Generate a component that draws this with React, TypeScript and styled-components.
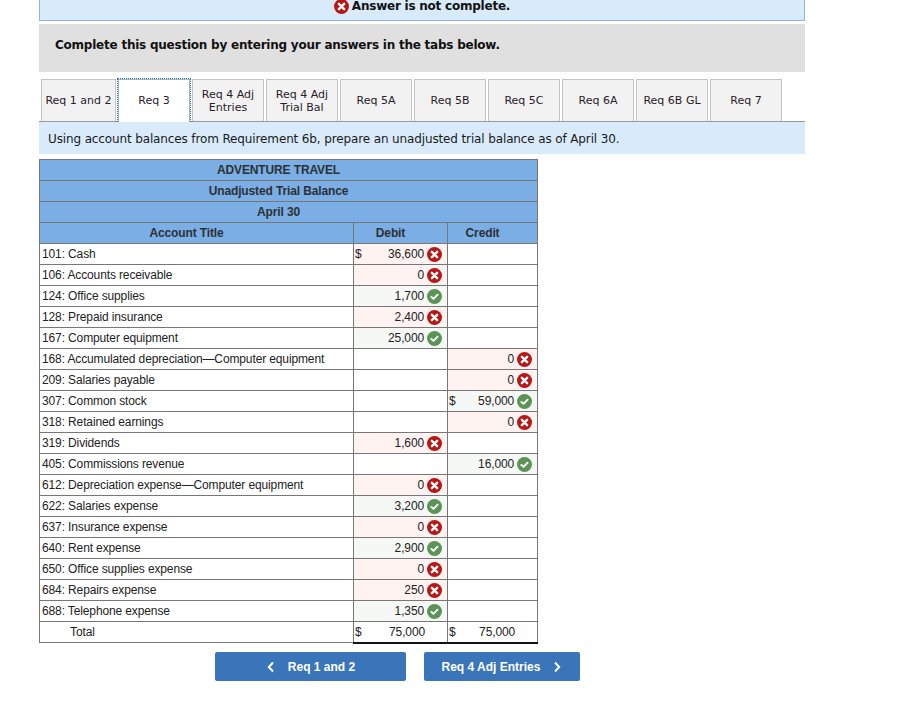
import React from 'react'
import styled, { createGlobalStyle, css } from 'styled-components'

const GlobalStyle = createGlobalStyle`
	html, body {
		margin: 0;
		padding: 0;
		background: #fff;
		overflow: hidden;
	}
`

const Page = styled.div`
	width: 902px;
	height: 725px;
	padding-left: 39px;
	box-sizing: border-box;
	overflow: hidden;
	font-family: "DejaVu Sans", Verdana, sans-serif;
	color: #111;
`

const Banner = styled.div`
	width: 766px;
	height: 31px;
	margin-top: -10px;
	box-sizing: border-box;
	background: #d9ebfa;
	border: 1px solid #8db5dc;
	display: flex;
	align-items: flex-start;
	justify-content: center;
	gap: 3px;
	padding: 8px 0 0 0;
	font-size: 12px;
	letter-spacing: -0.23px;
	font-weight: 700;
	line-height: 15px;
`

const Instructions = styled.div`
	width: 766px;
	height: 48px;
	margin-top: 3px;
	box-sizing: border-box;
	background: #e0e0e0;
	padding: 13px 16px;
	font-size: 12px;
	letter-spacing: -0.23px;
	font-weight: 700;
	line-height: 16px;
`

const TabBar = styled.div`
	width: 766px;
	height: 43px;
	margin-top: 7px;
	box-sizing: border-box;
	border-bottom: 1px solid #999;
	padding-left: 2px;
	display: flex;
	gap: 2px;
`

const Tab = styled.div<{ $active?: boolean; $wide?: boolean }>`
	width: ${props => (props.$wide ? 75 : 72)}px;
	height: 42px;
	box-sizing: border-box;
	display: flex;
	flex: none;
	align-items: center;
	justify-content: center;
	text-align: center;
	font-size: 11px;
	line-height: 13px;
	color: #2a1a2a;
	background: #f2f2f2;
	border: 1px solid #c4c4c4;
	border-bottom: 0;
	${props => props.$active && css`
		position: relative;
		width: 74px;
		height: 44px;
		margin: -1px -1px 0;
		padding-bottom: 1px;
		background: #fff;
		border: 1px dotted #2f6fb0;
		border-bottom: 0;
		box-shadow: inset 1px 1px 0 #9db4cb, inset -1px 0 0 #9db4cb;
	`}
`

const Prompt = styled.div`
	width: 766px;
	height: 32px;
	box-sizing: border-box;
	background: #d9ebfa;
	padding: 10px 9px 0;
	font-size: 12px;
	letter-spacing: -0.13px;
	line-height: 15px;
	color: #1a1a1a;
`

const Sheet = styled.table`
	width: 498px;
	margin-top: 5px;
	border-collapse: collapse;
	table-layout: fixed;
	font-family: "Liberation Sans", Arial, sans-serif;
	font-size: 12px;
	letter-spacing: -0.125px;
	color: #222;
`

const HeadCell = styled.th`
	height: 21px;
	padding: 0 20px 0 0;
	box-sizing: border-box;
	background: #7aaee4;
	border: 1px solid #777;
	font-weight: 700;
	text-align: center;
	color: #2c3136;
`

const TitleCell = styled.td<{ $indent?: boolean }>`
	height: 21px;
	padding: 0 0 0 ${props => (props.$indent ? 30 : 2)}px;
	box-sizing: border-box;
	border: 1px solid #777;
	white-space: nowrap;
`

const AmountCell = styled.td<{ $state?: 'bad' | 'good'; $total?: boolean }>`
	height: 21px;
	padding: 0;
	box-sizing: border-box;
	border: 1px solid #777;
	background: ${props => (props.$state === 'bad' ? '#fff3f2' : props.$state === 'good' ? '#f6f8f5' : '#fff')};
	${props => props.$total && 'border-top: 1px solid #222; border-bottom: 2px solid #111;'}
`

const AmountInner = styled.div<{ $reserve: number }>`
	display: flex;
	align-items: center;
	padding: 0 ${props => props.$reserve}px 0 1px;
`

const Dollar = styled.span`
	font-size: 12px;
`

const Amount = styled.span`
	margin-left: auto;
`

const StatusIcon = styled.svg`
	width: 15px;
	height: 15px;
	margin-left: 3px;
	flex: none;
`

const BannerIcon = styled(StatusIcon)`
	margin-left: 0;
`

const NavRow = styled.div`
	display: flex;
	margin: 8px 0 0 176px;
	gap: 18px;
`

const NavButton = styled.div<{ $width: number }>`
	width: ${props => props.$width}px;
	height: 29px;
	box-sizing: border-box;
	padding-top: 1px;
	background: #3a75b9;
	border-radius: 2px;
	display: flex;
	align-items: center;
	justify-content: center;
	gap: 12px;
	color: #fff;
	font-family: "Liberation Sans", Arial, sans-serif;
	font-size: 12px;
	font-weight: 700;
`

const Chevron = styled.svg`
	width: 10px;
	height: 12px;
`

const BadMark = () => (
	<>
		<circle cx="8" cy="8" r="8" fill="#b91616" />
		<path d="M5.2 5.2l5.6 5.6M10.8 5.2l-5.6 5.6" stroke="#fff" strokeWidth="2.6" strokeLinecap="round" />
	</>
)

const BadIcon = () => (
	<StatusIcon viewBox="0 0 16 16">
		<BadMark />
	</StatusIcon>
)

const GoodIcon = () => (
	<StatusIcon viewBox="0 0 16 16">
		<circle cx="8" cy="8" r="8" fill="#5c9458" />
		<path d="M4.6 8.4l2.3 2.2 4.4-4.6" stroke="#fff" strokeWidth="2" fill="none" strokeLinecap="round" strokeLinejoin="round" />
	</StatusIcon>
)

type Entry = {
	value: string;
	ok: boolean;
	dollar?: boolean;
}

type Line = {
	title: string;
	debit?: Entry;
	credit?: Entry;
}

const LINES: Line[] = [
	{ title: '101: Cash', debit: { value: '36,600', ok: false, dollar: true } },
	{ title: '106: Accounts receivable', debit: { value: '0', ok: false } },
	{ title: '124: Office supplies', debit: { value: '1,700', ok: true } },
	{ title: '128: Prepaid insurance', debit: { value: '2,400', ok: false } },
	{ title: '167: Computer equipment', debit: { value: '25,000', ok: true } },
	{ title: '168: Accumulated depreciation—Computer equipment', credit: { value: '0', ok: false } },
	{ title: '209: Salaries payable', credit: { value: '0', ok: false } },
	{ title: '307: Common stock', credit: { value: '59,000', ok: true, dollar: true } },
	{ title: '318: Retained earnings', credit: { value: '0', ok: false } },
	{ title: '319: Dividends', debit: { value: '1,600', ok: false } },
	{ title: '405: Commissions revenue', credit: { value: '16,000', ok: true } },
	{ title: '612: Depreciation expense—Computer equipment', debit: { value: '0', ok: false } },
	{ title: '622: Salaries expense', debit: { value: '3,200', ok: true } },
	{ title: '637: Insurance expense', debit: { value: '0', ok: false } },
	{ title: '640: Rent expense', debit: { value: '2,900', ok: true } },
	{ title: '650: Office supplies expense', debit: { value: '0', ok: false } },
	{ title: '684: Repairs expense', debit: { value: '250', ok: false } },
	{ title: '688: Telephone expense', debit: { value: '1,350', ok: true } },
]

const TABS = [
	['Req 1 and 2'],
	['Req 3'],
	['Req 4 Adj', 'Entries'],
	['Req 4 Adj', 'Trial Bal'],
	['Req 5A'],
	['Req 5B'],
	['Req 5C'],
	['Req 6A'],
	['Req 6B GL'],
	['Req 7'],
]

const EntryCell = ({ entry }: { entry?: Entry }) => {
	if (!entry) return <AmountCell />
	return (
		<AmountCell $state={entry.ok ? 'good' : 'bad'}>
			<AmountInner $reserve={5}>
				{entry.dollar && <Dollar>$</Dollar>}
				<Amount>{entry.value}</Amount>
				{entry.ok ? <GoodIcon /> : <BadIcon />}
			</AmountInner>
		</AmountCell>
	)
}

const TotalCell = () => (
	<AmountCell $total>
		<AmountInner $reserve={22}>
			<Dollar>$</Dollar>
			<Amount>75,000</Amount>
		</AmountInner>
	</AmountCell>
)

const App = () => {
	return (
		<Page>
			<GlobalStyle />
			<Banner>
				<BannerIcon viewBox="0 0 16 16">
					<BadMark />
				</BannerIcon>
				<span>Answer is not complete.</span>
			</Banner>
			<Instructions>Complete this question by entering your answers in the tabs below.</Instructions>
			<TabBar>
				{TABS.map((lines, i) => (
					<Tab key={lines.join()} $active={i === 1} $wide={i === 0}>
						<div>
							{lines.map(line => (
								<div key={line}>{line}</div>
							))}
						</div>
					</Tab>
				))}
			</TabBar>
			<Prompt>Using account balances from Requirement 6b, prepare an unadjusted trial balance as of April 30.</Prompt>
			<Sheet>
				<colgroup>
					<col width="314" />
					<col width="94" />
					<col width="90" />
				</colgroup>
				<thead>
					<tr><HeadCell colSpan={3}>ADVENTURE TRAVEL</HeadCell></tr>
					<tr><HeadCell colSpan={3}>Unadjusted Trial Balance</HeadCell></tr>
					<tr><HeadCell colSpan={3}>April 30</HeadCell></tr>
					<tr>
						<HeadCell>Account Title</HeadCell>
						<HeadCell>Debit</HeadCell>
						<HeadCell>Credit</HeadCell>
					</tr>
				</thead>
				<tbody>
					{LINES.map(line => (
						<tr key={line.title}>
							<TitleCell>{line.title}</TitleCell>
							<EntryCell entry={line.debit} />
							<EntryCell entry={line.credit} />
						</tr>
					))}
					<tr>
						<TitleCell $indent>Total</TitleCell>
						<TotalCell />
						<TotalCell />
					</tr>
				</tbody>
			</Sheet>
			<NavRow>
				<NavButton $width={191}>
					<Chevron viewBox="0 0 10 12">
						<path d="M7 1.5L2.8 6 7 10.5" stroke="#fff" strokeWidth="2" fill="none" />
					</Chevron>
					<span>Req 1 and 2</span>
				</NavButton>
				<NavButton $width={156}>
					<span>Req 4 Adj Entries</span>
					<Chevron viewBox="0 0 10 12">
						<path d="M3 1.5L7.2 6 3 10.5" stroke="#fff" strokeWidth="2" fill="none" />
					</Chevron>
				</NavButton>
			</NavRow>
		</Page>
	)
}

export default App
